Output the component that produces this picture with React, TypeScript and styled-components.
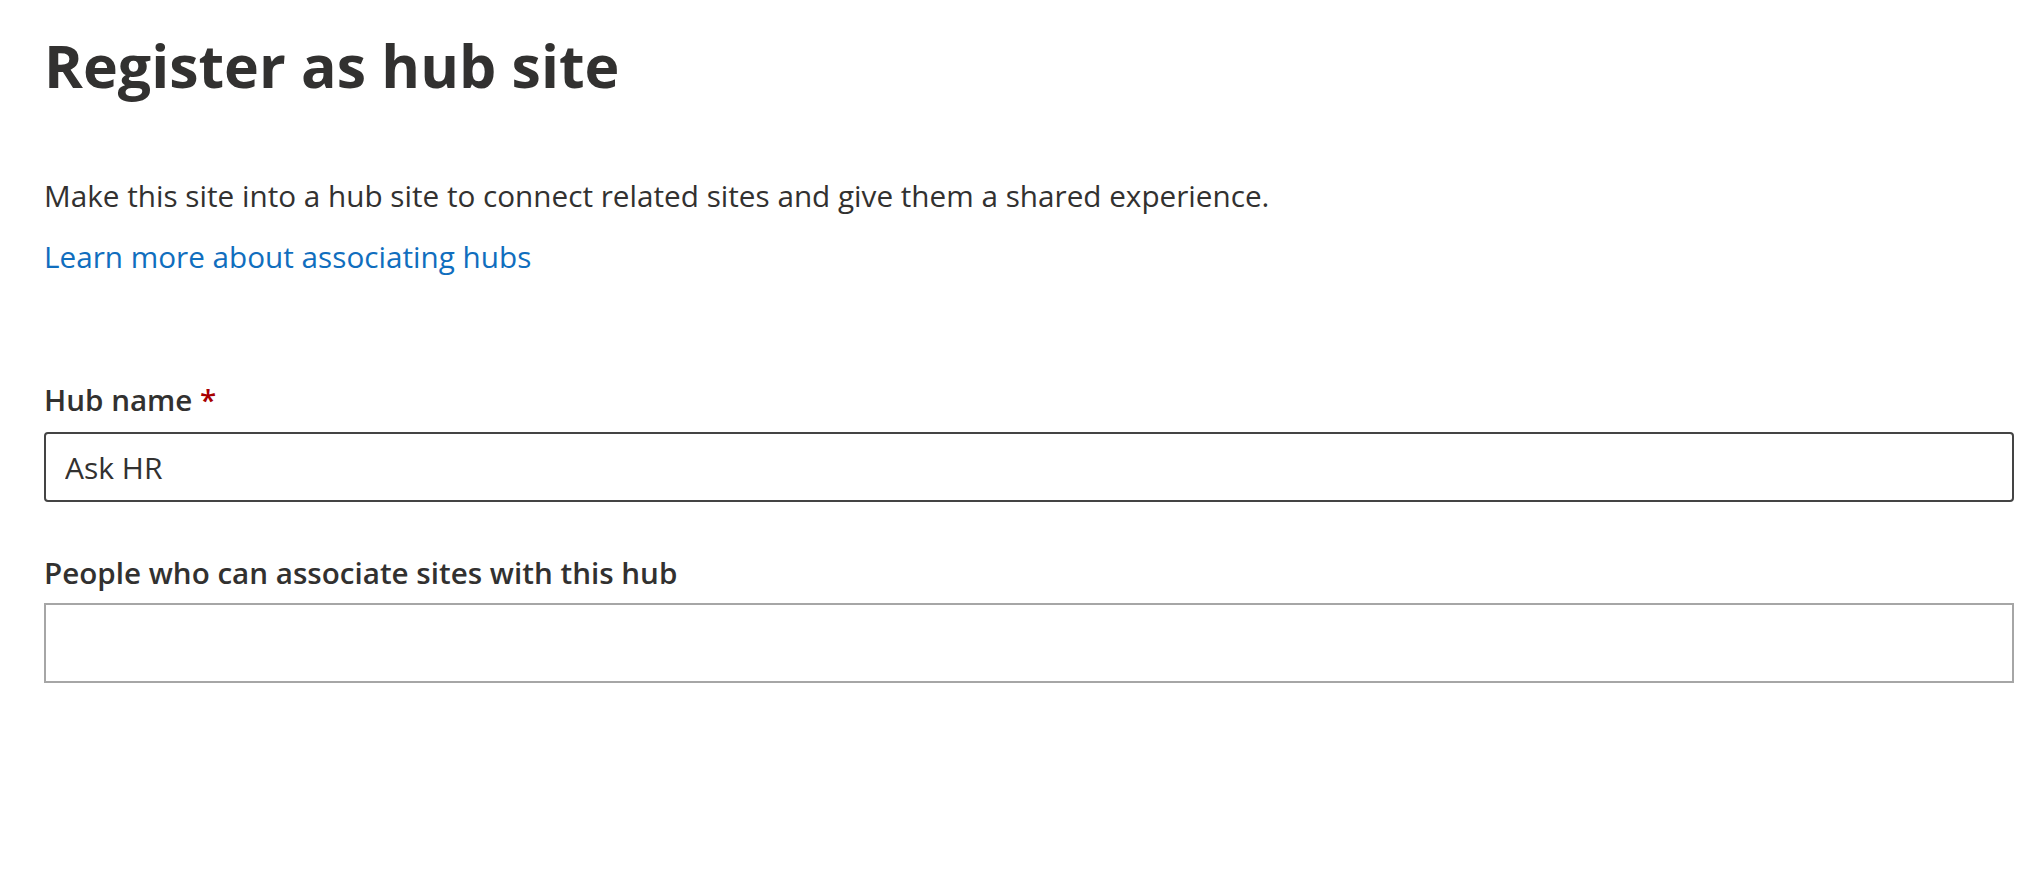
import styled, { createGlobalStyle } from 'styled-components';

const GlobalStyle = createGlobalStyle`
  html, body {
    margin: 0;
    padding: 0;
    background: #ffffff;
  }
  body {
    font-family: "Open Sans", "Noto Sans", "Liberation Sans", sans-serif;
    color: #323130;
  }
`;

const App = () => {
    return (
        <>
            <GlobalStyle />
            <Page>
                <Title>Register as hub site</Title>
                <Description>
                    Make this site into a hub site to connect related sites and give them a shared experience.
                </Description>
                <LearnLink href="#">Learn more about associating hubs</LearnLink>

                <Field $gap={12} $top={103}>
                    <Label>
                        Hub name <Required>*</Required>
                    </Label>
                    <TextInput $height={70} $dark defaultValue="Ask HR" />
                </Field>

                <Field $gap={10} $top={51}>
                    <Label>People who can associate sites with this hub</Label>
                    <TextInput $height={80} />
                </Field>
            </Page>
        </>
    );
};

export default App;

const Page = styled.main`
  display: flex;
  flex-direction: column;
  align-items: flex-start;
  padding: 25px 29px 0 44px;
`;

const Title = styled.h1`
  margin: 0;
  font-size: 59px;
  line-height: 80px;
  font-weight: 700;
  color: #323130;
`;

const Description = styled.p`
  margin: 71px 0 0;
  font-size: 29.7px;
  line-height: 40px;
  font-weight: 400;
`;

const LearnLink = styled.a`
  margin-top: 21px;
  font-size: 29.7px;
  line-height: 40px;
  color: #106ebe;
  text-decoration: none;
`;

const Field = styled.div<{ $gap: number; $top: number }>`
  width: 100%;
  display: flex;
  flex-direction: column;
  gap: ${({ $gap }) => $gap}px;
  margin-top: ${({ $top }) => $top}px;
`;

const Label = styled.label`
  font-size: 29.6px;
  line-height: 40px;
  font-weight: 600;
  color: #323130;
`;

const Required = styled.span`
  color: #a80000;
`;

const TextInput = styled.input<{ $height: number; $dark?: boolean }>`
  box-sizing: border-box;
  width: 100%;
  height: ${({ $height }) => $height}px;
  padding: 0 19px;
  border: 2px solid ${({ $dark }) => ($dark ? '#444444' : '#a6a6a6')};
  border-radius: ${({ $dark }) => ($dark ? '4px' : '0')};
  background: #ffffff;
  font-family: inherit;
  font-size: 30px;
  color: #323130;
  outline: none;
`;
